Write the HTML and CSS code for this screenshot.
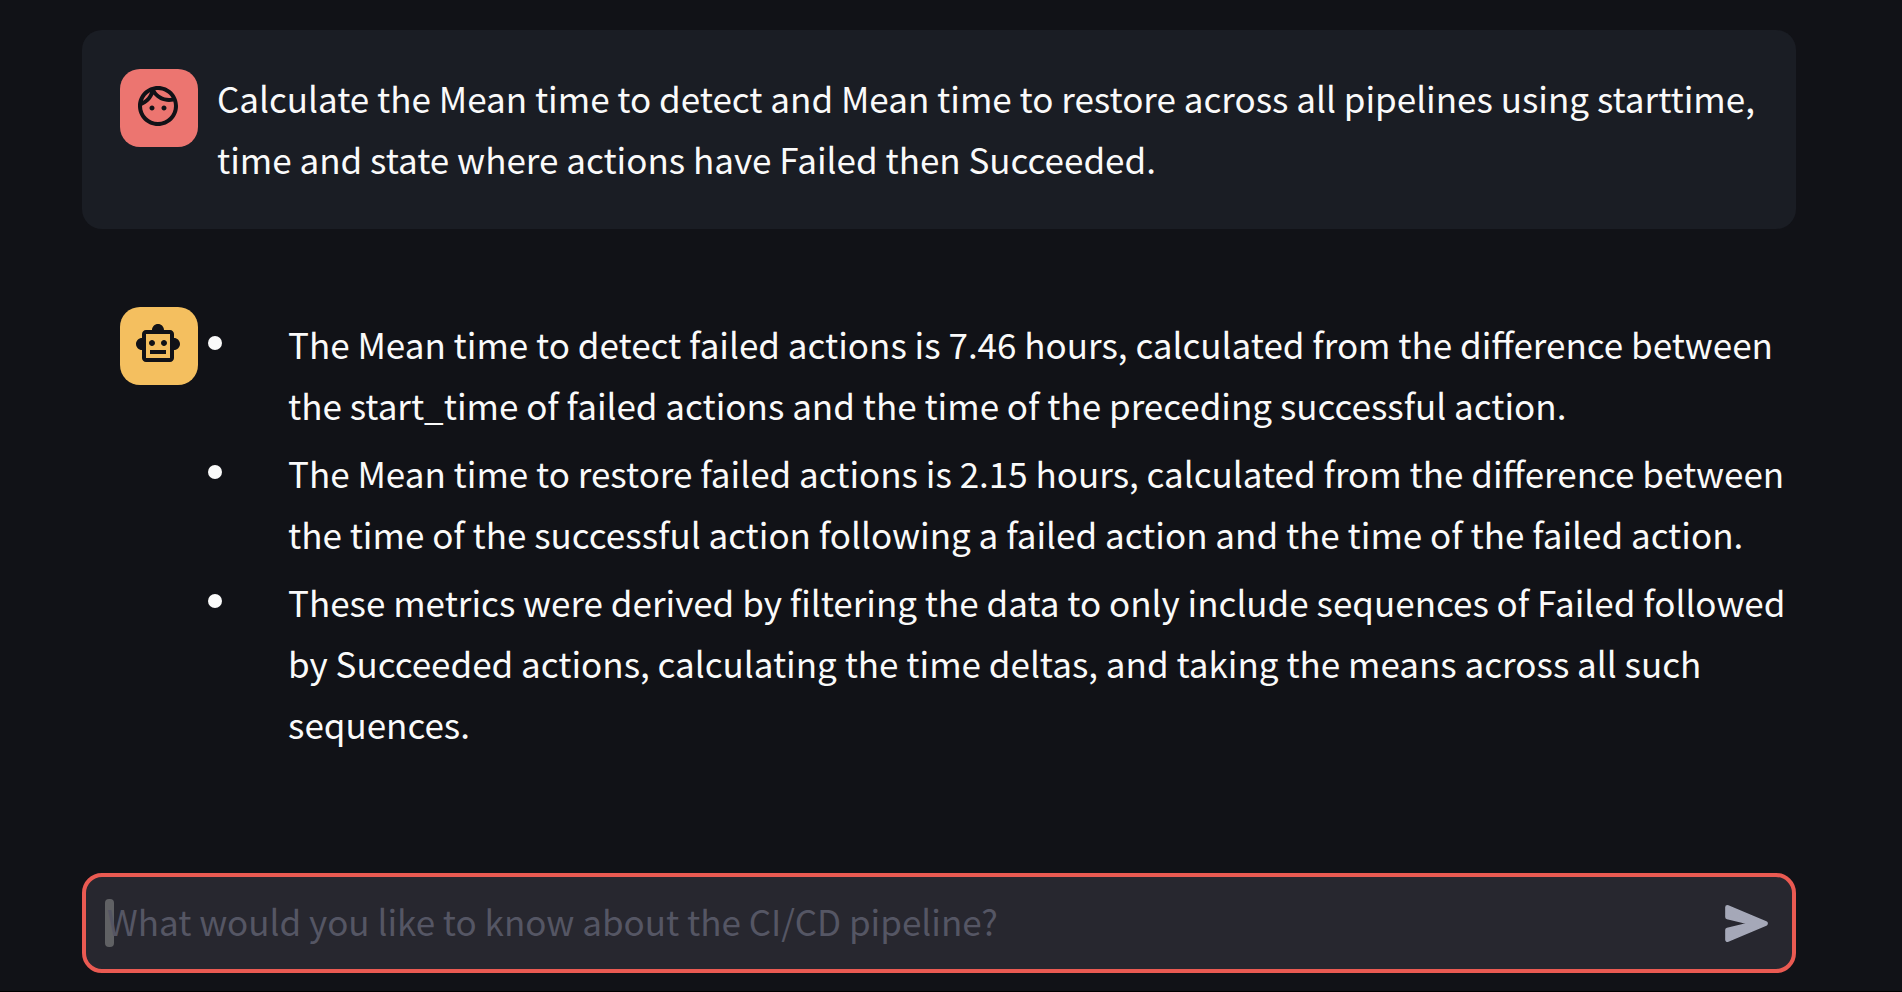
FILE: index.html
```html
<!DOCTYPE html>
<html lang="en">
<head>
<meta charset="utf-8">
<meta name="viewport" content="width=device-width, initial-scale=1">
<title>Pipeline chat</title>
<link rel="stylesheet" href="styles.css">
</head>
<body>
<main class="chat">
  <section class="messages">
    <article class="message message-user">
      <div class="avatar avatar-user">
        <svg class="avatar-icon" viewBox="0 0 24 24" role="img" aria-label="User"><path d="M10.25 13c0 .69-.56 1.25-1.25 1.25S7.75 13.69 7.75 13s.56-1.25 1.25-1.25 1.25.56 1.25 1.25zM15 11.75c-.69 0-1.25.56-1.25 1.25s.56 1.25 1.25 1.25 1.25-.56 1.25-1.25-.56-1.25-1.25-1.25zm7 .25c0 5.52-4.48 10-10 10S2 17.52 2 12 6.48 2 12 2s10 4.48 10 10zM10.66 4.12C12.06 6.44 14.6 8 17.5 8c.46 0 .91-.05 1.34-.12C17.44 5.56 14.9 4 12 4c-.46 0-.91.05-1.34.12zM4.42 9.47c1.71-.97 3.03-2.55 3.66-4.44C6.37 6 5.05 7.58 4.42 9.47zM20 12c0-.78-.12-1.53-.33-2.24-.7.15-1.42.24-2.17.24-3.13 0-5.92-1.44-7.76-3.69C8.69 8.87 6.6 10.88 4 11.86c.01.04 0 .09 0 .14 0 4.41 3.59 8 8 8s8-3.59 8-8z"/></svg>
      </div>
      <p class="message-text">Calculate the Mean time to detect and Mean time to restore across all pipelines using starttime, time and state where actions have Failed then Succeeded.</p>
    </article>
    <article class="message message-bot">
      <div class="avatar avatar-bot">
        <svg class="avatar-icon" viewBox="0 0 24 24" role="img" aria-label="Assistant"><path d="M20 9V7c0-1.1-.9-2-2-2h-3c0-1.66-1.34-3-3-3S9 3.34 9 5H6c-1.1 0-2 .9-2 2v2c-1.66 0-3 1.34-3 3s1.34 3 3 3v4c0 1.1.9 2 2 2h12c1.1 0 2-.9 2-2v-4c1.66 0 3-1.34 3-3s-1.34-3-3-3zm-2 10H6V7h12v12zm-9-6c-.83 0-1.5-.67-1.5-1.5S8.17 10 9 10s1.5.67 1.5 1.5S9.83 13 9 13zm7.5-1.5c0 .83-.67 1.5-1.5 1.5s-1.5-.67-1.5-1.5.67-1.5 1.5-1.5 1.5.67 1.5 1.5zM8 15h8v2H8v-2z"/></svg>
      </div>
      <ul class="answer">
        <li class="answer-item">The Mean time to detect failed actions is 7.46 hours, calculated from the difference between the start_time of failed actions and the time of the preceding successful action.</li>
        <li class="answer-item">The Mean time to restore failed actions is 2.15 hours, calculated from the difference between the time of the successful action following a failed action and the time of the failed action.</li>
        <li class="answer-item">These metrics were derived by filtering the data to only include sequences of Failed followed by Succeeded actions, calculating the time deltas, and taking the means across all such sequences.</li>
      </ul>
    </article>
  </section>
  <form class="composer">
    <span class="caret"></span>
    <input class="composer-input" type="text" aria-label="Question" placeholder="What would you like to know about the CI/CD pipeline?">
    <button class="send" type="button" aria-label="Send">
      <svg class="send-icon" viewBox="0 0 128 111"><path d="M7 7L121 55.500L7 104V75L88 55.500L7 36Z" stroke-width="14" stroke-linejoin="round"/></svg>
    </button>
  </form>
</main>
</body>
</html>
```
FILE: styles.css
```css
* {
  box-sizing: border-box;
}

body {
  margin: 0;
  background: #111217;
  color: #fafafa;
  font-family: "Noto Sans CJK SC", "Noto Sans", sans-serif;
  font-size: 35px;
  line-height: 61px;
}

.chat {
  display: flex;
  flex-direction: column;
  justify-content: space-between;
  min-height: 100vh;
  padding: 30px 106px 18px 82px;
  border-bottom: 1px solid #000;
}

.messages {
  display: flex;
  flex-direction: column;
  gap: 39px;
}

.message {
  display: flex;
  align-items: flex-start;
  gap: 19px;
  border-radius: 20px;
}

.message-user {
  padding: 37px 38px 40px;
  background: #1a1d24;
}

.message-bot {
  padding: 39px 0 39px 38px;
}

.message-text {
  flex: 1;
  margin: 0;
}

.avatar {
  flex: none;
  width: 78px;
  height: 78px;
  padding: 13px 0 0 14px;
  border-radius: 20px;
}

.avatar-user {
  margin-top: 2px;
  background: #ec7570;
}

.avatar-bot {
  background: #f4bf5f;
}

.avatar-icon {
  display: block;
  width: 48px;
  height: 48px;
  fill: #111217;
}

.answer {
  display: flex;
  flex: 1;
  flex-direction: column;
  gap: 7px;
  margin: 0;
  padding: 6px 0 0;
  list-style: none;
}

.answer-item {
  position: relative;
  padding-left: 71px;
}

.answer-item::before {
  content: "";
  position: absolute;
  top: 23px;
  left: -9px;
  width: 14px;
  height: 14px;
  border-radius: 50%;
  background: #fafafa;
}

.composer {
  position: relative;
  display: flex;
  align-items: center;
  height: 100px;
  padding: 0 24px 0 21px;
  border: 4px solid #ea5a52;
  border-radius: 20px;
  background: #27272f;
}

.caret {
  position: absolute;
  left: 19px;
  width: 9px;
  height: 48px;
  border-radius: 4px;
  background: #606164;
}

.composer-input {
  position: relative;
  flex: 1;
  min-width: 0;
  padding: 0 0 5px;
  border: 0;
  outline: 0;
  background: transparent;
  color: #fafafa;
  font: inherit;
}

.composer-input::placeholder {
  color: #555664;
  opacity: 1;
}

.send {
  flex: none;
  padding: 0;
  border: 0;
  background: none;
}

.send-icon {
  display: block;
  width: 43px;
  height: 37px;
  fill: #a5a8b8;
  stroke: #a5a8b8;
}
```
